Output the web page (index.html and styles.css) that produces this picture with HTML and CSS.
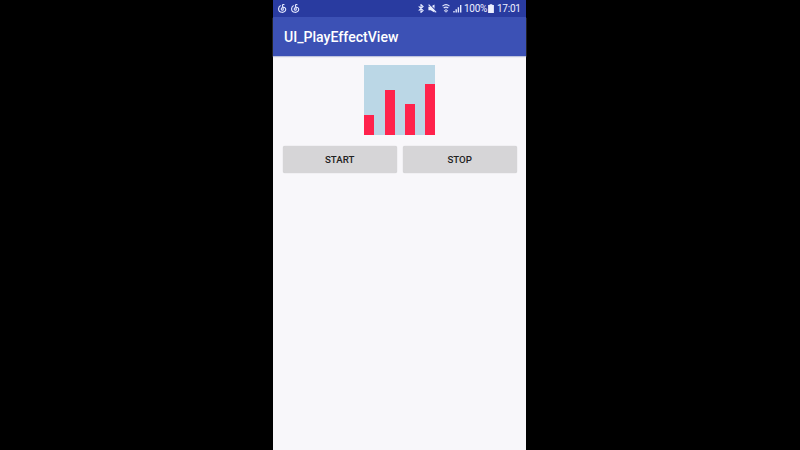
FILE: index.html
```html
<!DOCTYPE html>
<html lang="en">
<head>
<meta charset="utf-8">
<title>UI_PlayEffectView</title>
<link rel="stylesheet" href="styles.css">
</head>
<body>
<main class="phone">
  <header class="status">
    <div class="notices">
      <svg class="music" viewBox="0 0 9 9"><path d="M6.400.6C4.700.2 4.200 1 4.500 2L5.300 5.200C5.500 6.600 3 6.600 3.200 4.900C3.300 3.200 6.300 2.500 7.400 4.200C8.600 7.100 5.700 8.500 4 8.300C1.900 8 .5 6.300.6 4.600C.7 3.100 1.500 2.100 2.700 1.500"/></svg>
      <svg class="music" viewBox="0 0 9 9"><path d="M6.400.6C4.700.2 4.200 1 4.500 2L5.300 5.200C5.500 6.600 3 6.600 3.200 4.900C3.300 3.200 6.300 2.500 7.400 4.200C8.600 7.100 5.700 8.500 4 8.300C1.900 8 .5 6.300.6 4.600C.7 3.100 1.500 2.100 2.700 1.500"/></svg>
    </div>
    <div class="system">
      <svg class="bluetooth" viewBox="0 0 6 9"><path d="M.7 2.300L5.100 6.500L3 8.400V.6L5.100 2.500L.7 6.700"/></svg>
      <svg class="mute" viewBox="0 0 9 9"><path class="solid" d="M.4 2.800H2.700L6.500.4V8.400L2.700 6.200H.4Z"/><path class="gap" d="M1.400.2L8.800 7.600"/><path d="M.6.7L8.200 8.300"/></svg>
      <svg class="wifi" viewBox="0 0 8 9"><path d="M.5 2.200C2.500.4 5.500.4 7.500 2.200M1.700 4C3.200 2.800 4.800 2.800 6.300 4M4 4.700V6"/><path class="solid" d="M1.800 6.200H3.700V8.800ZM4.300 6.200H6.200L4.300 8.800Z"/></svg>
      <svg class="signal" viewBox="0 0 9 9"><path d="M1 7V8.500M3.200 5.300V8.500M5.400 3.200V8.500M7.700 1V8.500"/></svg>
      <span class="percent">100%</span>
      <svg class="battery" viewBox="0 0 6 9"><path class="solid" d="M1.700.2H4.300V1.100H5.900V8.900H.1V1.100H1.700Z"/></svg>
      <span class="clock">17:01</span>
    </div>
  </header>
  <div class="appbar"><h1>UI_PlayEffectView</h1></div>
  <section class="content">
    <div class="chart">
      <i class="bar low"></i><i class="bar high"></i><i class="bar middle"></i><i class="bar peak"></i>
    </div>
    <div class="actions">
      <button type="button">START</button>
      <button type="button">STOP</button>
    </div>
  </section>
</main>
</body>
</html>
```

FILE: styles.css
```css
* { box-sizing: border-box; }
body {
  margin: 0;
  height: 450px;
  overflow: hidden;
  background: #000;
  font-family: Roboto, sans-serif;
}
.phone {
  width: 253px;
  height: 450px;
  margin-left: 273px;
  background: #f8f7fa;
  display: flex;
  flex-direction: column;
}
.status {
  height: 17px;
  flex: none;
  display: flex;
  justify-content: space-between;
  padding: 0 5px;
  background: #293ba0;
  color: #edf0ff;
}
.notices, .system { display: flex; align-items: center; }
.notices { gap: 4px; }
.status svg { height: 9px; flex: none; fill: none; stroke: #e4e9ff; stroke-width: 1.1; }
.status .solid { fill: #edf0ff; stroke: none; }
.music { width: 9px; }
.bluetooth { width: 6px; margin-right: 4px; }
.mute { width: 9px; margin-right: 5px; }
.status .gap { stroke: #293ba0; }
.wifi { width: 8px; margin-right: 3px; }
.status .signal { width: 9px; margin-right: 2px; stroke-width: 1.4; }
.battery { width: 6px; margin-right: 3px; }
.percent, .clock {
  font-size: 10px;
  line-height: 17px;
  letter-spacing: -.25px;
}
.percent { width: 24px; white-space: nowrap; }
.clock { width: 24px; white-space: nowrap; }
.appbar {
  height: 39px;
  flex: none;
  display: flex;
  align-items: center;
  padding: 1px 11px 0;
  background: #3c51b5;
  box-shadow: 0 1px 1px #bfc4dd;
}
h1 { margin: 0; color: #fff; font-size: 14.100px; font-weight: 500; line-height: 20px; }
.content { padding: 9px 9.300px 0 9.700px; }
.chart {
  width: 71px;
  height: 70px;
  margin: 0 auto 11px;
  display: flex;
  align-items: flex-end;
  justify-content: space-between;
  background: #bbd7e6;
}
.bar { width: 10px; background: #ff234c; }
.low { height: 20px; }
.high { height: 45px; }
.middle { height: 31px; }
.peak { height: 51px; }
.actions { display: flex; gap: 6px; }
button {
  flex: 1;
  height: 26.500px;
  padding: 1px 0 0;
  border: 0;
  border-radius: 2px;
  background: #d6d5d7;
  box-shadow: 0 0 1px #bbb;
  color: #222;
  font: 500 9.700px/26px Roboto, sans-serif;
}
```
